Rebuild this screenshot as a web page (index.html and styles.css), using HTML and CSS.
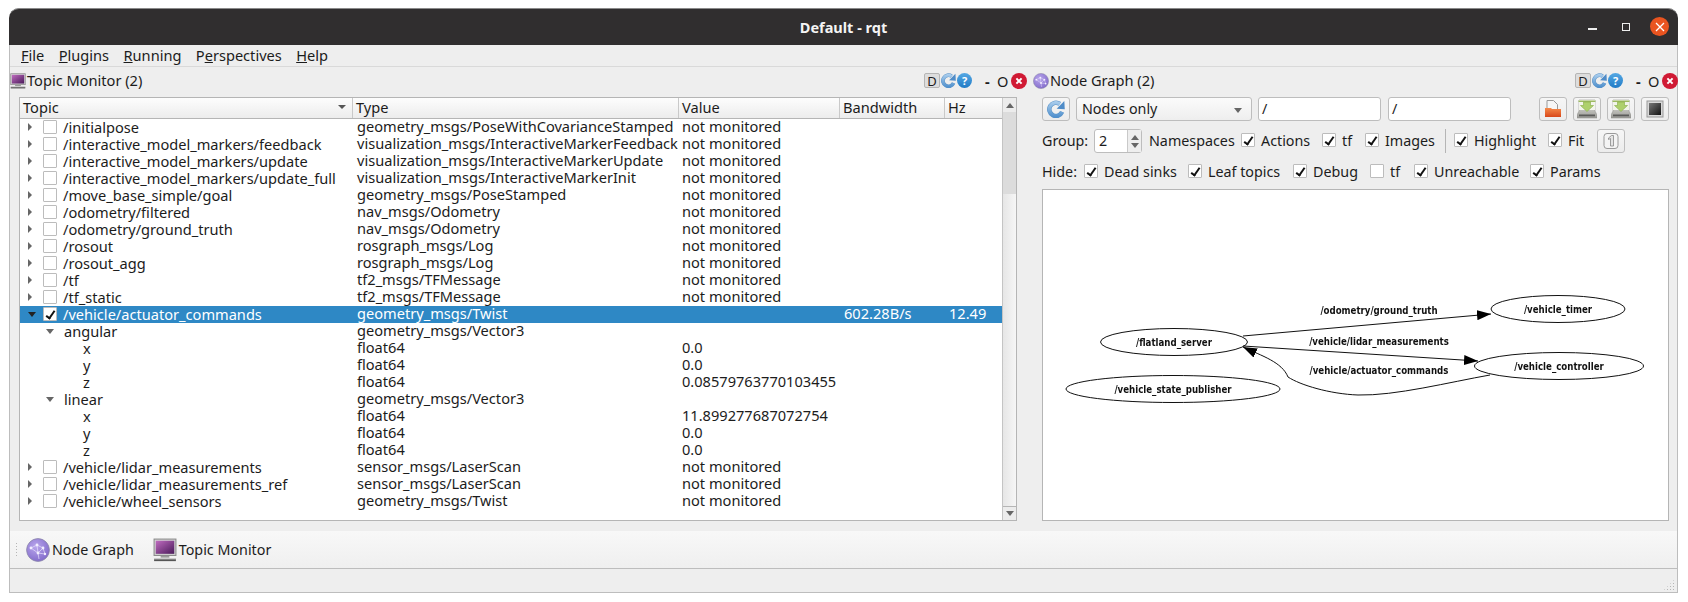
FILE: index.html
```html
<!DOCTYPE html>
<html lang="en">
<head>
    <meta charset="UTF-8">
    <title>Default - rqt</title>
    <link rel="stylesheet" href="styles.css">
</head>
<body>
    <svg class="defs" width="0" height="0">
        <defs>
            <linearGradient id="gBlue" gradientUnits="userSpaceOnUse" x1="0" y1="0" x2="0" y2="16"><stop offset="0" stop-color="#b4d4f0"/><stop offset="1" stop-color="#4a8ccb"/></linearGradient>
            <linearGradient id="gScreen" x1="0" y1="0" x2="1" y2="1"><stop offset="0" stop-color="#c06cc0"/><stop offset="1" stop-color="#4a1a5a"/></linearGradient>
            <linearGradient id="gFolder" x1="0" y1="0" x2="0" y2="1"><stop offset="0" stop-color="#f58a4a"/><stop offset="1" stop-color="#d8481a"/></linearGradient>
            <linearGradient id="gDrive" x1="0" y1="0" x2="0" y2="1"><stop offset="0" stop-color="#f0f0ea"/><stop offset="1" stop-color="#9a9a96"/></linearGradient>
            <linearGradient id="gStop" x1="0" y1="0" x2="1" y2="1"><stop offset="0" stop-color="#777"/><stop offset="1" stop-color="#111"/></linearGradient>
            <radialGradient id="gBall" cx="0.4" cy="0.35" r="0.75"><stop offset="0" stop-color="#b9a6ec"/><stop offset="1" stop-color="#7d66c8"/></radialGradient>
            <symbol id="i-refresh" viewBox="0 0 16 16">
                <path d="M13.400 10.600A5.900 5.900 0 1 1 11.400 3.500" fill="none" stroke="#5b93c8" stroke-width="4"/>
                <path d="M13.400 10.600A5.900 5.900 0 1 1 11.400 3.500" fill="none" stroke="url(#gBlue)" stroke-width="3"/>
                <path d="M8.600 7.800L15.800 8.200L15.400 .8z" fill="#4f8cc8"/>
            </symbol>
            <symbol id="i-close" viewBox="0 0 16 16">
                <circle cx="8" cy="8" r="8" fill="#d01a34"/>
                <path d="M5.400 5.400l5.200 5.200M10.600 5.400l-5.200 5.200" stroke="#fff" stroke-width="2"/>
            </symbol>
            <symbol id="i-monitor" viewBox="0 0 22 22">
                <rect x="1" y="1" width="20" height="15" fill="#d4d4d4" stroke="#8c8c8c"/>
                <rect x="2.500" y="2.500" width="17" height="12" fill="url(#gScreen)"/>
                <path d="M7 16.500h8v1.500h-8z" fill="#999"/>
                <path d="M1 19h20v2.200H1z" fill="#555"/>
                <path d="M1 18.600h20v1H1z" fill="#ccc"/>
            </symbol>
            <symbol id="i-graph" viewBox="0 0 24 24">
                <circle cx="12" cy="12" r="11.400" fill="url(#gBall)" stroke="#8a86a8" stroke-width=".8"/>
                <path d="M5 10l6-3 6 3 2 6M11 7l1 8-7-5M12 15l5-5M12 15l1 6M12 15l7 1" fill="none" stroke="#e6dffa" stroke-width=".7"/>
                <g fill="#f2eeff"><circle cx="5" cy="10" r="1.400"/><circle cx="11" cy="7" r="1.400"/><circle cx="17" cy="10" r="1.400"/><circle cx="12" cy="15" r="1.400"/><circle cx="19" cy="16" r="1.200"/></g>
            </symbol>
            <symbol id="i-save" viewBox="0 0 20 20">
                <path d="M2 1h16v11l2 4v3H0v-3l2-4z" fill="url(#gDrive)" stroke="#8a8a86" stroke-width=".5"/>
                <path d="M2 1h16v10H2z" fill="#f2f4ea"/>
                <path d="M1.500 1.500h17v1.500h-17z" fill="#9dba62"/>
                <path d="M6.500 3h7v3.500h3l-6.500 6-6.500-6h3z" fill="#aed06c" stroke="#86ad48" stroke-width=".6"/>
                <path d="M2 15.500h16v1.800H2z" fill="#5c5c5a"/>
            </symbol>
        </defs>
    </svg>

    <div class="window">
        <header class="titlebar">
            <span class="title">Default - rqt</span>
            <span class="wm-min"></span>
            <span class="wm-max"></span>
            <span class="wm-close"><svg width="10" height="10" viewBox="0 0 10 10"><path d="M1 1l8 8M9 1l-8 8" stroke="#fff" stroke-width="1.300"/></svg></span>
        </header>

        <nav class="menubar">
            <span><u>F</u>ile</span>
            <span><u>P</u>lugins</span>
            <span><u>R</u>unning</span>
            <span>P<u>e</u>rspectives</span>
            <span><u>H</u>elp</span>
        </nav>

        <main class="docks">
            <section class="dock dock-left">
                <div class="dock-title">
                    <svg class="dock-icon" width="16" height="16"><use href="#i-monitor"/></svg>
                    <span class="dock-name">Topic Monitor (2)</span>
                    <span class="dock-btns">
                        <span class="d-btn">D</span>
                        <svg width="15" height="15"><use href="#i-refresh"/></svg>
                        <span class="help-btn">?</span>
                        <span class="dash">-</span>
                        <span class="oh">O</span>
                        <svg width="16" height="16"><use href="#i-close"/></svg>
                    </span>
                </div>

                <div class="tree">
                    <div class="tree-main">
                        <div class="row head">
                            <span class="hcell hcell-topic">Topic<i class="sort"></i></span>
                            <span class="hcell">Type</span>
                            <span class="hcell">Value</span>
                            <span class="hcell">Bandwidth</span>
                            <span class="hcell">Hz</span>
                        </div>
                        <div class="row"><span class="topic"><i class="arr"></i><i class="cb"></i>/initialpose</span><span>geometry_msgs/PoseWithCovarianceStamped</span><span>not monitored</span><span></span><span></span></div>
                        <div class="row"><span class="topic"><i class="arr"></i><i class="cb"></i>/interactive_model_markers/feedback</span><span>visualization_msgs/InteractiveMarkerFeedback</span><span>not monitored</span><span></span><span></span></div>
                        <div class="row"><span class="topic"><i class="arr"></i><i class="cb"></i>/interactive_model_markers/update</span><span>visualization_msgs/InteractiveMarkerUpdate</span><span>not monitored</span><span></span><span></span></div>
                        <div class="row"><span class="topic"><i class="arr"></i><i class="cb"></i>/interactive_model_markers/update_full</span><span>visualization_msgs/InteractiveMarkerInit</span><span>not monitored</span><span></span><span></span></div>
                        <div class="row"><span class="topic"><i class="arr"></i><i class="cb"></i>/move_base_simple/goal</span><span>geometry_msgs/PoseStamped</span><span>not monitored</span><span></span><span></span></div>
                        <div class="row"><span class="topic"><i class="arr"></i><i class="cb"></i>/odometry/filtered</span><span>nav_msgs/Odometry</span><span>not monitored</span><span></span><span></span></div>
                        <div class="row"><span class="topic"><i class="arr"></i><i class="cb"></i>/odometry/ground_truth</span><span>nav_msgs/Odometry</span><span>not monitored</span><span></span><span></span></div>
                        <div class="row"><span class="topic"><i class="arr"></i><i class="cb"></i>/rosout</span><span>rosgraph_msgs/Log</span><span>not monitored</span><span></span><span></span></div>
                        <div class="row"><span class="topic"><i class="arr"></i><i class="cb"></i>/rosout_agg</span><span>rosgraph_msgs/Log</span><span>not monitored</span><span></span><span></span></div>
                        <div class="row"><span class="topic"><i class="arr"></i><i class="cb"></i>/tf</span><span>tf2_msgs/TFMessage</span><span>not monitored</span><span></span><span></span></div>
                        <div class="row"><span class="topic"><i class="arr"></i><i class="cb"></i>/tf_static</span><span>tf2_msgs/TFMessage</span><span>not monitored</span><span></span><span></span></div>
                        <div class="row selected"><span class="topic"><i class="arr open"></i><i class="cb on"></i>/vehicle/actuator_commands</span><span>geometry_msgs/Twist</span><span></span><span>602.28B/s</span><span>12.49</span></div>
                        <div class="row"><span class="field"><i class="arr open"></i>angular</span><span>geometry_msgs/Vector3</span><span></span><span></span><span></span></div>
                        <div class="row"><span class="leaf">x</span><span>float64</span><span>0.0</span><span></span><span></span></div>
                        <div class="row"><span class="leaf">y</span><span>float64</span><span>0.0</span><span></span><span></span></div>
                        <div class="row"><span class="leaf">z</span><span>float64</span><span>0.08579763770103455</span><span></span><span></span></div>
                        <div class="row"><span class="field"><i class="arr open"></i>linear</span><span>geometry_msgs/Vector3</span><span></span><span></span><span></span></div>
                        <div class="row"><span class="leaf">x</span><span>float64</span><span>11.899277687072754</span><span></span><span></span></div>
                        <div class="row"><span class="leaf">y</span><span>float64</span><span>0.0</span><span></span><span></span></div>
                        <div class="row"><span class="leaf">z</span><span>float64</span><span>0.0</span><span></span><span></span></div>
                        <div class="row"><span class="topic"><i class="arr"></i><i class="cb"></i>/vehicle/lidar_measurements</span><span>sensor_msgs/LaserScan</span><span>not monitored</span><span></span><span></span></div>
                        <div class="row"><span class="topic"><i class="arr"></i><i class="cb"></i>/vehicle/lidar_measurements_ref</span><span>sensor_msgs/LaserScan</span><span>not monitored</span><span></span><span></span></div>
                        <div class="row"><span class="topic"><i class="arr"></i><i class="cb"></i>/vehicle/wheel_sensors</span><span>geometry_msgs/Twist</span><span>not monitored</span><span></span><span></span></div>
                    </div>
                    <div class="scrollbar">
                        <span class="sb-btn"><i class="tri-up"></i></span>
                        <span class="sb-thumb"></span>
                        <span class="sb-groove"></span>
                        <span class="sb-btn sb-btn-end"><i class="tri-down"></i></span>
                    </div>
                </div>
            </section>

            <section class="dock dock-right">
                <div class="dock-title">
                    <svg class="dock-icon" width="16" height="16"><use href="#i-graph"/></svg>
                    <span class="dock-name">Node Graph (2)</span>
                    <span class="dock-btns">
                        <span class="d-btn">D</span>
                        <svg width="15" height="15"><use href="#i-refresh"/></svg>
                        <span class="help-btn">?</span>
                        <span class="dash">-</span>
                        <span class="oh">O</span>
                        <svg width="16" height="16"><use href="#i-close"/></svg>
                    </span>
                </div>

                <div class="graph-panel">
                    <div class="bar bar-top">
                        <button class="tool"><svg width="18" height="18"><use href="#i-refresh"/></svg></button>
                        <div class="combo">Nodes only<i class="tri-down"></i></div>
                        <div class="field-input">/</div>
                        <div class="field-input">/</div>
                        <div class="tools-end">
                            <button class="tool">
                                <svg width="18" height="18" viewBox="0 0 18 18">
                                    <path d="M3 .5h6.500l4 4v6H3z" fill="#f6f6f6" stroke="#999"/>
                                    <path d="M1 8h6l1 1h9v8H1z" fill="url(#gFolder)"/>
                                </svg>
                            </button>
                            <button class="tool"><svg width="20" height="20"><use href="#i-save"/></svg></button>
                            <button class="tool"><svg width="20" height="20"><use href="#i-save"/></svg></button>
                            <button class="tool">
                                <svg width="18" height="18" viewBox="0 0 18 18">
                                    <rect x="1" y="1" width="16" height="16" fill="#d8d8d8" stroke="#999"/>
                                    <rect x="3" y="3" width="12" height="12" fill="url(#gStop)"/>
                                </svg>
                            </button>
                        </div>
                    </div>

                    <div class="bar bar-group">
                        <span>Group:</span>
                        <div class="spin"><span class="spin-val">2</span><span class="spin-arrows"><i class="tri-up"></i><i class="tri-down"></i></span></div>
                        <span class="ns">Namespaces</span>
                        <label class="chk"><i class="cb on"></i>Actions</label>
                        <label class="chk"><i class="cb on"></i>tf</label>
                        <label class="chk"><i class="cb on"></i>Images</label>
                        <span class="vsep"></span>
                        <label class="chk"><i class="cb on"></i>Highlight</label>
                        <label class="chk"><i class="cb on"></i>Fit</label>
                        <button class="tool">
                            <svg width="18" height="18" viewBox="0 0 18 18">
                                <rect x="2" y="1.500" width="14" height="15" rx="3" fill="#f4f4f4" stroke="#9a9a9a"/>
                                <path d="M6.500 6l3-2.500h2v10.500h-3v-7.500l-2 1z" fill="#e4e4e4" stroke="#888" stroke-width=".8"/>
                            </svg>
                        </button>
                    </div>

                    <div class="bar bar-hide">
                        <span>Hide:</span>
                        <label class="chk"><i class="cb on"></i>Dead sinks</label>
                        <label class="chk"><i class="cb on"></i>Leaf topics</label>
                        <label class="chk"><i class="cb on"></i>Debug</label>
                        <label class="chk"><i class="cb"></i>tf</label>
                        <label class="chk"><i class="cb on"></i>Unreachable</label>
                        <label class="chk"><i class="cb on"></i>Params</label>
                    </div>

                    <div class="canvas">
                        <svg class="graph" viewBox="1043 190 625 330" width="625" height="330">
                            <defs>
                                <marker id="tip" markerWidth="15" markerHeight="10" refX="14" refY="5" orient="auto" markerUnits="userSpaceOnUse">
                                    <path d="M0 0L14 5L0 10z" fill="#000"/>
                                </marker>
                            </defs>
                            <g fill="none" stroke="#111" stroke-width="1">
                                <ellipse cx="1174" cy="342" rx="73.500" ry="13.500"/>
                                <ellipse cx="1558" cy="309" rx="67" ry="13.500"/>
                                <ellipse cx="1559" cy="366" rx="84.500" ry="13.500"/>
                                <ellipse cx="1173" cy="389" rx="107" ry="13.500"/>
                                <path d="M1243 336L1491 314" marker-end="url(#tip)"/>
                                <path d="M1243 346L1478 361" marker-end="url(#tip)"/>
                                <path d="M1490 375C1450 382 1395 396 1358 395C1330 394 1300 385 1288 377C1282 362 1262 356 1243 347" marker-end="url(#tip)"/>
                            </g>
                            <g class="graph-text" text-anchor="middle">
                                <text x="1174" y="346">/flatland_server</text>
                                <text x="1558" y="313">/vehicle_timer</text>
                                <text x="1559" y="370">/vehicle_controller</text>
                                <text x="1173" y="393">/vehicle_state_publisher</text>
                                <text x="1379" y="314">/odometry/ground_truth</text>
                                <text x="1379" y="345">/vehicle/lidar_measurements</text>
                                <text x="1379" y="374">/vehicle/actuator_commands</text>
                            </g>
                        </svg>
                    </div>
                </div>
            </section>
        </main>

        <div class="toolbar">
            <span class="grip"></span>
            <span class="tb-item"><svg width="24" height="24"><use href="#i-graph"/></svg>Node Graph</span>
            <span class="tb-item"><svg width="24" height="24"><use href="#i-monitor"/></svg>Topic Monitor</span>
        </div>

        <footer class="statusbar"><span class="size-grip"></span></footer>
    </div>
</body>
</html>
```

FILE: styles.css
```css
* {
    box-sizing: border-box;
}

body {
    margin: 0;
    background: #fff;
    font-family: 'Noto Sans', sans-serif;
    font-size: 14.6px;
    color: #1c1c1c;
}

.defs {
    position: absolute;
}

.window {
    width: 1669px;
    height: 585px;
    margin: 8px 0 0 9px;
    display: flex;
    flex-direction: column;
    background: #eeeeee;
    border: 1px solid #bdbdbd;
    border-top: 0;
    border-radius: 10px 10px 0 0;
}

/* title bar */
.titlebar {
    height: 37px;
    margin: 0 -1px;
    flex: none;
    position: relative;
    display: flex;
    align-items: center;
    justify-content: center;
    background: #302e2f;
    border-top: 1px solid #8a8a8a;
    border-radius: 10px 10px 0 0;
    color: #f4f4f4;
}

.title {
    font-weight: 700;
    font-size: 14.5px;
}

.wm-min {
    position: absolute;
    left: 1579px;
    top: 19px;
    width: 9px;
    height: 2px;
    background: #eee;
}

.wm-max {
    position: absolute;
    left: 1613px;
    top: 14px;
    width: 8px;
    height: 8px;
    border: 1px solid #eee;
}

.wm-close {
    position: absolute;
    left: 1641px;
    top: 8px;
    width: 19px;
    height: 19px;
    border-radius: 50%;
    background: #e95420;
    display: flex;
    align-items: center;
    justify-content: center;
}

/* menu */
.menubar {
    height: 22px;
    flex: none;
    display: flex;
    gap: 14.400px;
    align-items: center;
    padding-left: 11px;
    padding-bottom: 2px;
    border-bottom: 1px solid #d9d9d9;
}

.docks {
    flex: 1;
    display: flex;
    min-height: 0;
}

.dock {
    display: flex;
    flex-direction: column;
}

.dock-left {
    width: 1023px;
    flex: none;
}

.dock-right {
    flex: 1;
}

.dock-title {
    height: 30px;
    flex: none;
    display: flex;
    align-items: center;
    padding-bottom: 3px;
}

.dock-name {
    margin-left: 1px;
    margin-bottom: 1px;
}

.dock-btns {
    margin-left: auto;
    display: flex;
    align-items: center;
}

.dock-left .dock-btns {
    margin-right: 6px;
}

.d-btn {
    width: 16px;
    height: 15px;
    background: #ddd;
    border: 1px solid #b5b5b5;
    border-radius: 2px;
    display: flex;
    align-items: center;
    justify-content: center;
    font-size: 13px;
    margin-right: 1px;
}

.help-btn {
    width: 15px;
    height: 15px;
    margin-left: 1px;
    border-radius: 50%;
    background: linear-gradient(#55a8e4, #217bc6);
    color: #fff;
    font-size: 11px;
    font-weight: 700;
    display: flex;
    align-items: center;
    justify-content: center;
}

.dash {
    margin-left: 13px;
    font-weight: 700;
    width: 6px;
}

.oh {
    margin-left: 6px;
    margin-right: 2px;
    width: 12px;
}

/* tree */
.tree {
    margin-left: 9px;
    width: 998px;
    height: 424px;
    display: flex;
    background: #fff;
    border: 1px solid #b5b5b5;
}

.tree-main {
    flex: 1;
    min-width: 0;
}

.row {
    display: grid;
    grid-template-columns: 333px 326px 161px 105px 58px;
    height: 17px;
    padding-bottom: 1px;
    line-height: 15px;
    white-space: nowrap;
}

.row > span:not(:first-child) {
    padding-left: 4px;
}

.row > span:nth-child(3) {
    padding-left: 3px;
}

.row.head {
    height: 21px;
    padding-bottom: 0;
    line-height: 19px;
    background: linear-gradient(#fdfdfd, #ececec);
    border-bottom: 1px solid #b5b5b5;
}

.hcell {
    position: relative;
    padding-left: 3px;
    border-right: 1px solid #c9c9c9;
}

.row.head > span:not(:first-child) {
    padding-left: 3px;
}

.sort {
    position: absolute;
    right: 6px;
    top: 7px;
    border-left: 4px solid transparent;
    border-right: 4px solid transparent;
    border-top: 4px solid #555;
}

.row.selected {
    background: #2e88c5;
    color: #fff;
}

.topic,
.field,
.leaf {
    display: flex;
    align-items: center;
}

.topic {
    padding-left: 8px;
}

.field {
    padding-left: 26px;
}

.leaf {
    padding-left: 63px;
}

.arr {
    width: 0;
    height: 0;
    border-top: 4px solid transparent;
    border-bottom: 4px solid transparent;
    border-left: 4px solid #666;
    margin-right: 11px;
}

.arr.open {
    border-left: 4px solid transparent;
    border-right: 4px solid transparent;
    border-top: 5px solid #666;
    border-bottom: 0;
    margin-right: 7px;
}

.selected .arr.open {
    border-top-color: #222;
}

.cb {
    width: 14px;
    height: 14px;
    flex: none;
    background: #fff;
    border: 1px solid #bcbcbc;
    border-radius: 1px;
    margin-right: 6px;
    position: relative;
}

.cb.on::after {
    content: "";
    position: absolute;
    left: 3.500px;
    top: 0.500px;
    width: 3px;
    height: 8px;
    border: solid #111;
    border-width: 0 2px 2px 0;
    transform: rotate(35deg);
}

.field .arr.open {
    margin-right: 10px;
}

/* scrollbar */
.scrollbar {
    width: 14px;
    flex: none;
    display: flex;
    flex-direction: column;
    background: linear-gradient(to right, #e6e6e6, #f6f6f6);
    border-left: 1px solid #c4c4c4;
}

.sb-btn {
    height: 14px;
    flex: none;
    display: flex;
    align-items: center;
    justify-content: center;
    background: #ececec;
}

.sb-btn-end {
    border-top: 1px solid #b5b5b5;
}

.sb-thumb {
    height: 82px;
    background: #dcdcdc;
}

.sb-groove {
    flex: 1;
}

.tri-up,
.tri-down {
    display: block;
    border-left: 4px solid transparent;
    border-right: 4px solid transparent;
}

.tri-up {
    border-bottom: 5px solid #666;
}

.tri-down {
    border-top: 5px solid #666;
}

/* node graph panel */
.graph-panel {
    padding: 0 9px;
    display: flex;
    flex-direction: column;
}

.bar {
    white-space: nowrap;
    align-items: center;
    font-size: 14.300px;
}

.bar-top {
    display: flex;
    height: 24px;
    gap: 6px;
}

.bar-group {
    display: grid;
    grid-template-columns: 52px 48px 99px 81px 43px 80px 9px 94px 49px 28px;
    height: 24px;
    margin-top: 8px;
}

.bar-hide {
    display: grid;
    grid-template-columns: 42px 104px 105px 77px 44px 116px 1fr;
    height: 22px;
    margin-top: 8px;
}

.bar-group > span:first-child,
.bar-hide > span:first-child,
.ns,
.chk {
    padding-bottom: 2px;
}

.ns {
    padding-left: 7px;
}

.chk {
    display: flex;
    align-items: center;
}

.vsep {
    width: 1px;
    height: 24px;
    background: #b5b5b5;
}

.tool {
    width: 28px;
    height: 24px;
    padding: 0;
    display: flex;
    align-items: center;
    justify-content: center;
    background: linear-gradient(#f6f6f6, #ececec);
    border: 1px solid #bdbdbd;
    border-radius: 3px;
}

.combo {
    width: 176px;
    height: 24px;
    position: relative;
    padding-left: 5px;
    line-height: 22px;
    background: linear-gradient(#fbfbfb, #eeeeee);
    border: 1px solid #bdbdbd;
    border-radius: 3px;
}

.combo .tri-down {
    position: absolute;
    right: 9px;
    top: 10px;
}

.field-input {
    width: 123px;
    height: 24px;
    padding-left: 3px;
    line-height: 22px;
    background: #fff;
    border: 1px solid #bdbdbd;
    border-radius: 3px;
}

.field-input + .field-input {
    margin-left: 1px;
}

.tools-end {
    margin-left: auto;
    display: flex;
    gap: 6px;
}

.spin {
    height: 24px;
    display: flex;
    background: #fff;
    border: 1px solid #bdbdbd;
    border-radius: 3px;
}

.spin-val {
    flex: 1;
    padding-left: 4px;
    line-height: 22px;
}

.spin-arrows {
    width: 14px;
    display: flex;
    flex-direction: column;
    align-items: center;
    justify-content: center;
    gap: 3px;
    background: #eeeeee;
    border-left: 1px solid #c9c9c9;
}

.canvas {
    height: 332px;
    margin-top: 6px;
    background: #fff;
    border: 1px solid #b5b5b5;
}

.graph {
    display: block;
}

.graph-text {
    font-family: 'DejaVu Sans', sans-serif;
    font-size: 9.600px;
    font-weight: 700;
    font-stretch: condensed;
    fill: #111;
    filter: blur(0.3px);
}

/* toolbar at the bottom */
.toolbar {
    height: 38px;
    flex: none;
    display: flex;
    align-items: center;
    padding-left: 5px;
    gap: 19px;
    font-size: 14.300px;
    background: linear-gradient(#f8f8f8, #efefef);
    border-bottom: 1px solid #bdbdbd;
}

.grip {
    width: 4px;
    height: 16px;
    margin-right: -12px;
    background: radial-gradient(#b5b5b5 35%, transparent 40%) 0 0 / 3px 3px;
}

.tb-item {
    display: flex;
    align-items: center;
    gap: 2px;
}

.statusbar {
    height: 23px;
    flex: none;
    position: relative;
}

.size-grip {
    position: absolute;
    right: 2px;
    bottom: 1px;
    width: 12px;
    height: 12px;
    background: radial-gradient(#b5b5b5 35%, transparent 40%) 0 0 / 3px 3px;
    clip-path: polygon(100% 0, 100% 100%, 0 100%);
}
```
